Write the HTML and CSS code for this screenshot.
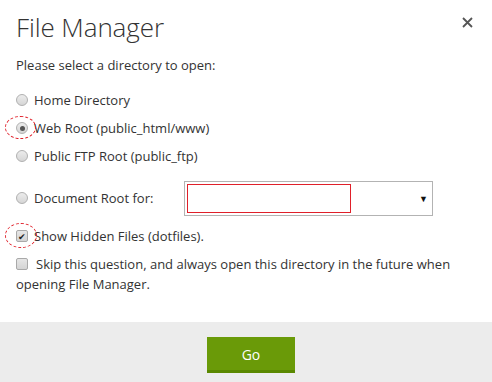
FILE: index.html
```html
<!DOCTYPE html>
<html lang="en">
<head>
  <meta charset="UTF-8" />
  <title>File Manager</title>
  <link rel="stylesheet" href="styles.css">
</head>
<body>

  <div class="modal">
    <div class="modal-header">
      <h1>File Manager</h1>
      <svg class="close" width="11" height="11" viewBox="0 0 11 11">
        <path d="M1 1 L10 10 M10 1 L1 10" stroke="#555" stroke-width="1.8" />
      </svg>
    </div>

    <div class="modal-body">
      <p class="intro">Please select a directory to open:</p>

      <label class="option"><span class="radio"></span>Home Directory</label>
      <label class="option marked"><span class="radio checked"></span>Web Root (public_html/www)<span class="mark"></span></label>
      <label class="option"><span class="radio"></span>Public FTP Root (public_ftp)</label>

      <div class="option docroot">
        <label class="docroot-label"><span class="radio"></span>Document Root for:</label>
        <div class="select">
          <div class="select-value"></div>
          <span class="arrow">&#9660;</span>
        </div>
      </div>

      <label class="option marked hidden-files"><span class="check checked">&#10004;</span>Show Hidden Files (dotfiles).<span class="mark mark-wide"></span></label>
      <label class="skip"><span class="check"></span>Skip this question, and always open this directory in the future when opening File Manager.</label>
    </div>

    <div class="modal-footer">
      <button class="go-btn">Go</button>
    </div>
  </div>

</body>
</html>
```

FILE: styles.css
```css
* { margin: 0; padding: 0; box-sizing: border-box; font-family: 'Open Sans', 'Noto Sans', sans-serif; }
body { background: white; color: #333; width: 492px; height: 382px; overflow: hidden; }

.modal { display: flex; flex-direction: column; height: 382px; }

.modal-header {
  display: flex; justify-content: space-between; align-items: center;
  padding: 10px 19px 0 16px; height: 44px;
}
.modal-header h1 { font-weight: 300; font-size: 26px; letter-spacing: -0.1px; color: #333; }
.close { margin-top: -9px; }

.modal-body { flex: 1; padding: 12px 16px 0 16px; font-size: 13px; }
.intro { margin-bottom: 12px; line-height: 18px; }

.option {
  position: relative; display: flex; align-items: center; height: 28px;
}
.radio {
  width: 12px; height: 12px; border-radius: 50%; border: 1px solid #b0b0b0;
  background: linear-gradient(#ececec, #d6d6d6); margin: 0 6px 0 0;
  display: inline-flex; align-items: center; justify-content: center; flex-shrink: 0;
}
.radio.checked::after {
  content: ""; width: 5px; height: 5px; border-radius: 50%; background: #555;
}

.docroot { height: 40px; margin-top: 8px; }
.docroot-label { display: flex; align-items: center; width: 168px; }
.select {
  width: 249px; height: 35px; border: 1px solid #b3b3b3; display: flex;
  align-items: center; justify-content: space-between; padding: 0 4px 0 2px;
}
.select-value { width: 164px; height: 29px; border: 1px solid #e0202a; }
.arrow { font-size: 9px; color: #111; }

.hidden-files { margin-top: 4px; }
.check {
  width: 12px; height: 12px; border: 1px solid #a9a9a9; border-radius: 2px;
  background: linear-gradient(#e6e6e6, #d4d4d4); margin-right: 6px;
  display: inline-flex; align-items: center; justify-content: center;
  font-size: 9px; line-height: 1; color: #222; flex-shrink: 0;
}
.skip { display: block; line-height: 20px; margin-top: 4px; }
.skip .check { vertical-align: -1px; margin-right: 8px; }

.mark {
  position: absolute; left: -11px; top: 2px; width: 31px; height: 23px;
  border: 1px dashed #e0202a; border-radius: 50%;
}
.mark-wide { width: 32px; height: 25px; top: 1px; }

.modal-footer {
  background: #ececec; height: 60px; display: flex; justify-content: center;
  align-items: flex-start; padding: 15px 0 0 10px;
}
.go-btn {
  width: 88px; height: 36px; background: #6a9a08; color: white; border: none;
  border-bottom: 3px solid #5a8800; font-size: 14px; padding-top: 2px;
}
```
